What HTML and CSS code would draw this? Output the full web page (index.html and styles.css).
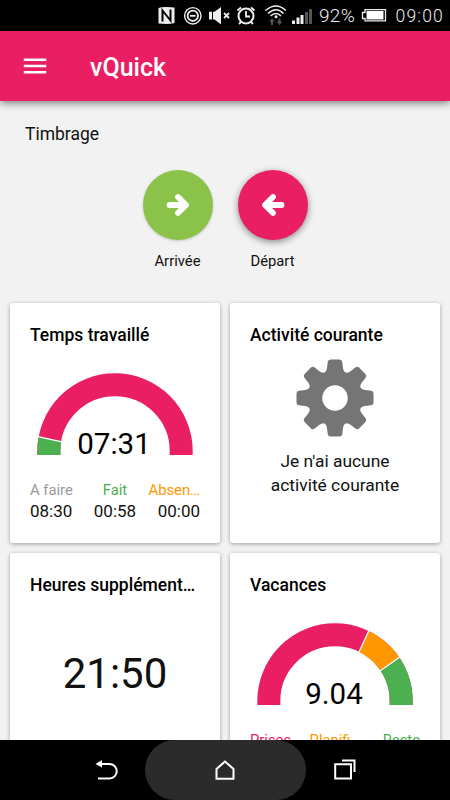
FILE: index.html
```html
<!DOCTYPE html>
<html lang="fr">
<head>
  <meta charset="UTF-8">
  <meta name="viewport" content="width=device-width, initial-scale=1.0">
  <title>vQuick</title>
  <link rel="stylesheet" href="styles.css">
</head>
<body>
  <div class="status-bar">
    <!-- NFC, ne pas déranger, muet, alarme, wifi, réseau -->
    <svg class="status-icons" width="162" height="31" viewBox="0 0 162 31">
      <path d="M8.500 8Q13 6.500 24.500 7.500V23Q19 24.500 8.500 23.500Z" fill="#eee"/>
      <path d="M12.500 21.500V10.500L20.500 20.500V9.500" fill="none" stroke="#000" stroke-width="2"/>
      <circle cx="42.800" cy="15.800" r="8.200" fill="none" stroke="#eee" stroke-width="1.400"/>
      <circle cx="42.800" cy="15.800" r="5.200" fill="none" stroke="#eee" stroke-width="1.800"/>
      <path d="M40 15.800H45.600" stroke="#eee" stroke-width="1.800"/>
      <path d="M59 11.800H62V19.500H59ZM63 11.800H64.500L71 7V24.500L64.500 19.500H63Z" fill="#eee"/>
      <path d="M74 13L79 18M79 13L74 18" stroke="#eee" stroke-width="1.800"/>
      <circle cx="96" cy="16" r="7.500" fill="none" stroke="#eee" stroke-width="2"/>
      <path d="M96 11V16.500H100M87.500 10.500L91 7.500M101 7.500L104.500 10.500M91 22L89 24M101 22L103 24" fill="none" stroke="#eee" stroke-width="1.800"/>
      <g fill="none" stroke="#eee" stroke-width="1.500">
        <path d="M115.500 10.500Q126 1.500 136 10.500"/>
        <path d="M118 13.500Q126 6 133.500 13.500"/>
        <path d="M120.500 16Q126 11 131 16"/>
      </g>
      <circle cx="126" cy="16.800" r="1.500" fill="#eee"/>
      <path d="M119 21.500L122 18.500L125 21.500H123V25H121V21.500ZM126.500 21.500H128.500V18.500H130.500V21.500H132.500L129.500 25Z" fill="#555"/>
      <path d="M142 20.500H145V24H142ZM146.500 17.500H149.500V24H146.500ZM150.500 15H153.500V24H150.500Z" fill="#eee"/>
      <path d="M155 12H158V24H155ZM159 9H162V24H159Z" fill="#555"/>
    </svg>
    <span class="battery-level">92%</span>
    <svg class="battery" width="26" height="31" viewBox="0 0 26 31">
      <path d="M4 9.700H24.500V20.800H4V18.500H1.500V12.500H4Z" fill="none" stroke="#eee" stroke-width="1.300"/>
      <path d="M5.500 11H22.500V19.500H5.500Z" fill="#fff"/>
    </svg>
    <span class="clock">09:00</span>
  </div>

  <header class="toolbar">
    <svg class="menu-icon" width="30" height="30" viewBox="0 0 24 24">
      <path d="M3 18h18v-2H3v2zm0-5h18v-2H3v2zm0-7v2h18V6H3z" fill="#fff"/>
    </svg>
    <h1 class="toolbar-title">vQuick</h1>
  </header>

  <main class="content">
    <h2 class="section-title">Timbrage</h2>
    <div class="actions">
      <div class="action">
        <button class="fab fab-in">
          <svg width="24" height="26" viewBox="0 0 24 26">
            <path d="M3.500 13H19M12 5L20 13L12 21" class="arrow"/>
          </svg>
        </button>
        <span>Arrivée</span>
      </div>
      <div class="action">
        <button class="fab fab-out">
          <svg width="24" height="26" viewBox="0 0 24 26">
            <path d="M20.500 13H5M12 5L4 13L12 21" class="arrow"/>
          </svg>
        </button>
        <span>Départ</span>
      </div>
    </div>

    <div class="cards">
      <section class="card">
        <h3 class="card-title">Temps travaillé</h3>
        <div class="gauge">
          <svg width="160" height="82" viewBox="0 0 160 82">
            <circle cx="80" cy="78" r="66.200" class="ring pink"/>
            <path d="M13.900 82V78A66.200 66.200 0 0 1 14.900 65.900" class="ring green"/>
            <path d="M1 63.200L29 69.300" class="split"/>
          </svg>
          <span class="gauge-value">07:31</span>
        </div>
        <div class="legend">
          <div class="left"><span class="grey-text">A faire</span><b>08:30</b></div>
          <div class="center"><span class="green-text">Fait</span><b>00:58</b></div>
          <div class="right"><span class="orange-text">Absen…</span><b>00:00</b></div>
        </div>
      </section>

      <section class="card">
        <h3 class="card-title">Activité courante</h3>
        <div class="activity">
          <svg width="78" height="78" viewBox="-39 -39 78 78">
            <defs>
              <path id="tooth" d="M-13 -24Q-8.500 -25.500 -8 -30L-7.300 -36Q-7 -38.500 -4.500 -38.500H4.500Q7 -38.500 7.300 -36L8 -30Q8.500 -25.500 13 -24L10 -18H-10Z"/>
            </defs>
            <g fill="#757575">
              <circle r="20" fill="none" stroke="#757575" stroke-width="14.500"/>
              <use href="#tooth"/>
              <use href="#tooth" transform="rotate(45)"/>
              <use href="#tooth" transform="rotate(90)"/>
              <use href="#tooth" transform="rotate(135)"/>
              <use href="#tooth" transform="rotate(180)"/>
              <use href="#tooth" transform="rotate(225)"/>
              <use href="#tooth" transform="rotate(270)"/>
              <use href="#tooth" transform="rotate(315)"/>
            </g>
          </svg>
          <p>Je n'ai aucune activité courante</p>
        </div>
      </section>

      <section class="card">
        <h3 class="card-title">Heures supplément…</h3>
        <div class="big-value">21:50</div>
      </section>

      <section class="card">
        <h3 class="card-title">Vacances</h3>
        <div class="gauge">
          <svg width="160" height="82" viewBox="0 0 160 82">
            <circle cx="80" cy="78" r="66.200" class="ring pink"/>
            <path d="M108.800 18.400A66.200 66.200 0 0 1 134.600 40.500" class="ring orange"/>
            <path d="M134.600 40.500A66.200 66.200 0 0 1 146.200 78V82" class="ring green"/>
            <path d="M103.200 30.800L114.400 6.500M123.800 48.800L145.500 33.500" class="split"/>
          </svg>
          <span class="gauge-value">9.04</span>
        </div>
        <div class="legend">
          <div class="left"><span class="pink-text">Prises</span></div>
          <div class="center"><span class="orange-text">Planifi…</span></div>
          <div class="right"><span class="green-text">Reste</span></div>
        </div>
      </section>
    </div>
  </main>

  <nav class="nav-bar">
    <svg width="24" height="24" viewBox="0 0 24 24">
      <path d="M5 6H15.500A6.600 6.600 0 0 1 15.500 20.500H4" fill="none" stroke="#fff" stroke-width="2"/>
      <path d="M1.500 6L8 2V9.500Z" fill="#fff"/>
    </svg>
    <span class="home">
      <svg width="24" height="24" viewBox="0 0 24 24">
        <path d="M3.500 20.700V11L12 3.500L20.500 11V20.700Z" fill="none" stroke="#fff" stroke-width="2"/>
      </svg>
    </span>
    <svg width="24" height="24" viewBox="0 0 24 24">
      <path d="M2.200 6.200H18V20.500H2.200Z" fill="none" stroke="#fff" stroke-width="2"/>
      <path d="M9 2.500H21.500V14" fill="none" stroke="#fff" stroke-width="2"/>
    </svg>
  </nav>
</body>
</html>
```
FILE: styles.css
```css
* {
  box-sizing: border-box;
}
body {
  margin: 0;
  height: 800px;
  display: flex;
  flex-direction: column;
  overflow: hidden;
  font-family: Roboto, sans-serif;
  background-color: #f2f2f2;
  color: #111;
}
h1, h2, h3, p {
  margin: 0;
}
svg {
  display: block;
}

.status-bar {
  height: 31px;
  flex: none;
  display: flex;
  align-items: center;
  padding: 0 6px 0 150px;
  background-color: #000;
  color: #eee;
  font-size: 17.5px;
  font-weight: 300;
}
.battery-level {
  width: 42px;
  margin-left: 7px;
  font-size: 19px;
  letter-spacing: 0.3px;
}
.battery {
  margin-left: 0;
}
.clock {
  margin-left: auto;
  letter-spacing: 1.2px;
}

.toolbar {
  position: relative;
  height: 70px;
  flex: none;
  display: flex;
  align-items: center;
  padding: 0 20px;
  background-color: #e91e63;
  box-shadow: 0 2px 8px rgba(0, 0, 0, 0.5);
}
.toolbar-title {
  margin: 3px 0 0 40px;
  font-size: 25px;
  font-weight: 500;
  color: #fff;
}

.content {
  flex: 1;
  min-height: 0;
  overflow: hidden;
}
.section-title {
  padding: 22px 25px 0;
  font-size: 17.5px;
  font-weight: 400;
  line-height: 22px;
}
.actions {
  display: flex;
  justify-content: center;
  gap: 25px;
  margin-top: 25px;
}
.action {
  width: 70px;
  display: flex;
  flex-direction: column;
  align-items: center;
  gap: 11px;
  font-size: 14.8px;
  line-height: 20px;
}
.fab {
  width: 70px;
  height: 70px;
  display: flex;
  align-items: center;
  justify-content: center;
  padding: 0;
  border: none;
  border-radius: 50%;
}
.fab-in {
  background-color: #8bc34a;
  box-shadow: 0 1px 3px rgba(0, 0, 0, 0.2);
}
.fab-out {
  background-color: #e91e63;
  box-shadow: 0 2px 7px rgba(0, 0, 0, 0.45);
}
.arrow {
  fill: none;
  stroke: #fff;
  stroke-width: 5.8;
  stroke-linecap: round;
  stroke-linejoin: round;
}

.cards {
  display: grid;
  grid-template-columns: 210px 210px;
  grid-auto-rows: 240px;
  gap: 10px;
  padding: 0 10px;
  margin-top: 31.5px;
}
.card {
  padding: 20px;
  border-radius: 3px;
  background-color: #fff;
  box-shadow: 0 1px 4px rgba(0, 0, 0, 0.35);
}
.card-title {
  font-size: 17.5px;
  font-weight: 500;
  line-height: 25px;
  white-space: nowrap;
  color: #000;
}
.gauge {
  display: flex;
  flex-direction: column;
  align-items: center;
  margin-top: 25px;
}
.gauge-value {
  margin-top: -28px;
  padding-right: 2px;
  font-size: 29.5px;
  line-height: 34px;
  color: #000;
}
.ring {
  fill: none;
  stroke-width: 23;
}
.pink { stroke: #e91e63; }
.green { stroke: #4caf50; }
.orange { stroke: #ff9800; }
.split {
  stroke: #fff;
  stroke-width: 1.3;
}
.legend {
  display: grid;
  grid-template-columns: repeat(3, minmax(0, 1fr));
  column-gap: 6px;
  margin-top: 19px;
}
.legend span {
  display: block;
  font-size: 14.8px;
  line-height: 20px;
  white-space: nowrap;
}
.legend b {
  font-size: 17px;
  font-weight: 400;
  line-height: 22px;
}
.left { text-align: left; }
.center { text-align: center; }
.right { text-align: right; }
.grey-text { color: #999; }
.green-text { color: #4caf50; }
.orange-text { color: #ff9800; }
.pink-text { color: #e91e63; }

.activity {
  display: flex;
  flex-direction: column;
  align-items: center;
  margin-top: 11px;
  font-size: 17.4px;
  line-height: 24px;
  text-align: center;
}
.activity p {
  width: 150px;
  margin-top: 12px;
}
.big-value {
  margin-top: 49px;
  font-size: 42px;
  line-height: 54px;
  text-align: center;
}

.nav-bar {
  height: 60px;
  flex: none;
  display: flex;
  align-items: center;
  justify-content: center;
  gap: 27px;
  background-color: #000;
}
.home {
  width: 161px;
  height: 60px;
  display: flex;
  align-items: center;
  justify-content: center;
  border-radius: 30px;
  background-color: #2b2b2b;
}
```
